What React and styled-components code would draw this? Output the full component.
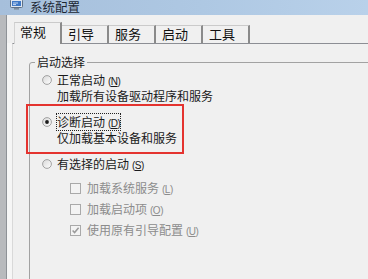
import React from 'react';
import styled, { createGlobalStyle } from 'styled-components';

const GlobalStyle = createGlobalStyle`
  html, body {
    margin: 0;
    padding: 0;
    background: #f0f0f0;
    overflow: hidden;
  }
  body {
    font-family: "Noto Sans CJK SC", "Noto Sans", sans-serif;
    font-size: 12px;
    color: #1a1a1a;
  }
`;

const Window = styled.div`
  height: 100vh;
  display: flex;
  flex-direction: column;
  overflow: hidden;
`;

const TitleBar = styled.div`
  height: 15px;
  flex: none;
  display: flex;
  align-items: flex-start;
  gap: 7px;
  padding-left: 10px;
  background: linear-gradient(to right, #a6bfdb, #aec8e3 55%, #b9d1ea);
  overflow: hidden;
`;

const TitleText = styled.span`
  font-size: 12.5px;
  line-height: 14px;
  color: #1c2733;
`;

const Body = styled.div`
  flex: 1;
  display: flex;
  min-height: 0;
`;

const Frame = styled.div`
  width: 6px;
  flex: none;
  background: #b8babd;
  border-right: 1px solid #8e9297;
`;

const Content = styled.div`
  flex: 1;
  min-width: 0;
  display: flex;
  flex-direction: column;
  background: #f6f6f6;
  overflow: hidden;
`;

const TabStrip = styled.div`
  height: 28px;
  flex: none;
  display: flex;
  align-items: flex-end;
  padding-left: 7px;
  box-sizing: border-box;
  background: #f0f0f0;
`;

const Tab = styled.div`
  box-sizing: border-box;
  font-size: 13px;
  color: #111;
  background: #f0f0f0;
  border-top: 1px solid #cacaca;
  border-right: 2px solid #8a8a8a;
  height: ${({ $active }) => ($active ? '22px' : '18px')};
  line-height: ${({ $active }) => ($active ? '18px' : '16px')};
  padding: ${({ $active }) => ($active ? '0 14px 0 5px' : '0 13px 0 6px')};
  border-left: ${({ $active }) => ($active ? '1px solid #d2d2d2' : 'none')};
  margin-bottom: ${({ $active }) => ($active ? '-1px' : '0')};
  position: relative;
  z-index: ${({ $active }) => ($active ? 1 : 0)};
`;

const Panel = styled.div`
  flex: 1;
  margin-left: 5px;
  padding-left: 16px;
  border-top: 1px solid #8c8e94;
  border-left: 1px solid #d9d9d9;
  background: #f0f0f0;
`;

const Group = styled.fieldset`
  margin: 11px 0 0 0;
  padding: 0;
  width: 400px;
  min-height: 300px;
  border: 1px solid #a2a2a2;
  border-radius: 3px;
`;

const Legend = styled.legend`
  margin-left: 5px;
  padding: 0 2px;
  line-height: 14px;
  font-size: 12px;
`;

const Options = styled.div`
  display: flex;
  flex-direction: column;
  gap: 10px;
  padding: 3px 0 0 12px;
`;

const Option = styled.div`
  display: grid;
  grid-template-columns: 10px auto;
  grid-auto-rows: 16px;
  column-gap: 5px;
  line-height: 16px;
  position: relative;
  width: max-content;

  ${({ $highlight }) =>
    $highlight &&
    `
    &::after {
      content: "";
      position: absolute;
      left: -16px;
      top: -10px;
      width: 158px;
      height: 50px;
      box-sizing: border-box;
      border: 2px solid #e4332f;
      pointer-events: none;
    }
  `}
`;

const RadioMark = styled.svg`
  margin-top: 3px;
  display: block;
`;

const Label = styled.span`
  justify-self: start;
  height: 16px;
  outline: ${({ $focus }) => ($focus ? '1px dotted #222' : 'none')};
`;

const SubText = styled.span`
  grid-column: 2;
`;

const Key = styled.span`
  font-family: "Liberation Sans", Arial, sans-serif;
  font-size: 10px;
  line-height: 10px;
  margin-left: 3px;
  letter-spacing: -0.5px;
`;

const CheckList = styled.div`
  display: flex;
  flex-direction: column;
  gap: 5px;
  margin-top: 8px;
  padding-left: 28px;
`;

const CheckRow = styled.div`
  display: flex;
  align-items: center;
  gap: 6px;
  height: 16px;
  line-height: 16px;
  color: #8c8c8c;
`;

const Radio = ({ checked }) => (
  <RadioMark width="10" height="10" viewBox="0 0 10 10">
    <defs>
      <linearGradient id="rg" x1="0" y1="0" x2="1" y2="1">
        <stop offset="0" stopColor="#d8d8d8" />
        <stop offset="1" stopColor="#ffffff" />
      </linearGradient>
    </defs>
    <circle cx="5" cy="5" r="4.4" fill="url(#rg)" stroke="#9a9a9a" strokeWidth="0.9" />
    {checked && <circle cx="5" cy="5" r="1.9" fill="#1c1c1c" />}
  </RadioMark>
);

const Check = ({ checked }) => (
  <svg width="11" height="11" viewBox="0 0 11 11" style={{ display: 'block', flex: 'none' }}>
    <rect x="0.5" y="0.5" width="10" height="10" fill="#f3f3f3" stroke="#a9a9a9" />
    {checked && (
      <path d="M2.6 5.4 L4.6 7.6 L8.6 2.8" fill="none" stroke="#9a9a9a" strokeWidth="1.5" />
    )}
  </svg>
);

const AppIcon = () => (
  <svg width="13" height="11" viewBox="0 0 13 11" style={{ marginTop: '-1px', flex: 'none' }}>
    <rect x="0.5" y="0.5" width="12" height="8" rx="1" fill="#dfe7f1" stroke="#5f7186" />
    <rect x="2" y="2" width="9" height="5" fill="#3f78c6" />
    <path d="M3 4 h5 M3 5.6 h3" stroke="#e8f0fb" strokeWidth="0.8" />
    <rect x="4" y="9" width="5" height="1.6" fill="#7d8b9b" />
  </svg>
);

const AccessKey = ({ k }) => (
  <Key>
    (<u>{k}</u>)
  </Key>
);

const tabs = ['常规', '引导', '服务', '启动', '工具'];

export default function App() {
  return (
    <>
      <GlobalStyle />
      <Window>
        <TitleBar>
          <AppIcon />
          <TitleText>系统配置</TitleText>
        </TitleBar>
        <Body>
          <Frame />
          <Content>
            <TabStrip>
              {tabs.map((t, i) => (
                <Tab key={t} $active={i === 0}>
                  {t}
                </Tab>
              ))}
            </TabStrip>
            <Panel>
              <Group>
                <Legend>启动选择</Legend>
                <Options>
                  <Option>
                    <Radio />
                    <Label>
                      正常启动<AccessKey k="N" />
                    </Label>
                    <SubText>加载所有设备驱动程序和服务</SubText>
                  </Option>
                  <Option $highlight>
                    <Radio checked />
                    <Label $focus>
                      诊断启动<AccessKey k="D" />
                    </Label>
                    <SubText>仅加载基本设备和服务</SubText>
                  </Option>
                  <div>
                    <Option>
                      <Radio />
                      <Label>
                        有选择的启动<AccessKey k="S" />
                      </Label>
                    </Option>
                    <CheckList>
                      <CheckRow>
                        <Check />
                        <span>
                          加载系统服务<AccessKey k="L" />
                        </span>
                      </CheckRow>
                      <CheckRow>
                        <Check />
                        <span>
                          加载启动项<AccessKey k="O" />
                        </span>
                      </CheckRow>
                      <CheckRow>
                        <Check checked />
                        <span>
                          使用原有引导配置<AccessKey k="U" />
                        </span>
                      </CheckRow>
                    </CheckList>
                  </div>
                </Options>
              </Group>
            </Panel>
          </Content>
        </Body>
      </Window>
    </>
  );
}
